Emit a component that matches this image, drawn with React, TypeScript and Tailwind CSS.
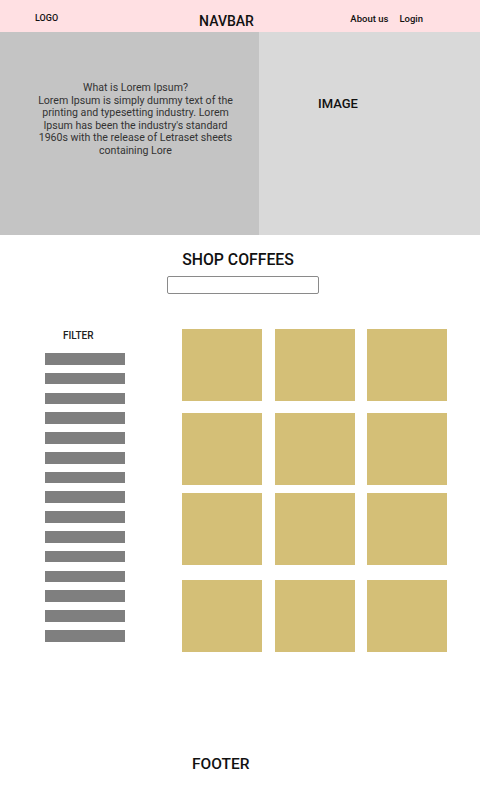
export default function App() {
  const bars = Array.from({ length: 15 }, (_, i) => i);
  const rows = [
    { id: 1, mt: "mt-0" },
    { id: 2, mt: "mt-[12px]" },
    { id: 3, mt: "mt-[8.3px]" },
    { id: 4, mt: "mt-[15px]" },
  ];

  return (
    <div className="w-[480px] min-h-[800px] bg-white font-['Roboto',sans-serif] text-[#111]">
      {/* Navbar */}
      <nav className="h-8 bg-[#ffe0e3] flex items-center pl-[35px] pr-[57px]">
        <span className="pt-[5px] text-[9px] font-medium leading-none">LOGO</span>
        <span className="ml-[141px] pt-[9px] text-[14px] font-medium leading-none">
          NAVBAR
        </span>
        <span className="ml-auto pt-[5px] text-[9.5px] font-medium leading-none">
          About us
        </span>
        <span className="ml-[11px] pt-[5px] text-[9.5px] font-medium leading-none">
          Login
        </span>
      </nav>

      {/* Hero */}
      <section className="h-[203px] flex">
        <div className="w-[259px] bg-[#c4c4c4] pt-[50px] pl-[12px]">
          <p className="text-center text-[10.6px] leading-[12.5px] text-[#333] whitespace-nowrap">
            What is Lorem Ipsum?
            <br />
            Lorem Ipsum is simply dummy text of the
            <br />
            printing and typesetting industry. Lorem
            <br />
            Ipsum has been the industry's standard
            <br />
            1960s with the release of Letraset sheets
            <br />
            containing Lore
          </p>
        </div>
        <div className="flex-1 bg-[#d9d9d9] pt-[59px] pl-[59px]">
          <span className="text-[13px] font-medium leading-4">IMAGE</span>
        </div>
      </section>

      {/* Shop */}
      <section className="pt-[14.5px] flex flex-col items-center">
        <h2 className="mr-[4px] text-[15.8px] font-medium leading-[19px]">
          SHOP COFFEES
        </h2>
        <input
          type="text"
          className="ml-[6px] mt-[7.5px] w-[152px] h-[18px] border border-[#8a8a8a] rounded-[2px] bg-white outline-none"
        />
      </section>

      <section className="mt-[35px] flex pl-[45px]">
        {/* Filter */}
        <div className="w-[80px] flex flex-col">
          <span className="ml-[18px] mt-[1px] text-[10px] font-medium leading-3 text-[#222]">
            FILTER
          </span>
          <div className="mt-[11px] flex flex-col gap-[8.2px]">
            {bars.map((b) => (
              <div key={b} className="h-[11.6px] bg-[#7f7f7f]" />
            ))}
          </div>
        </div>

        {/* Products */}
        <div className="ml-[57px] flex flex-col">
          {rows.map((r) => (
            <div key={r.id} className={`flex gap-[12.6px] ${r.mt}`}>
              <div className="w-[80px] h-[72px] bg-[#d4bf77]" />
              <div className="w-[80px] h-[72px] bg-[#d4bf77]" />
              <div className="w-[80px] h-[72px] bg-[#d4bf77]" />
            </div>
          ))}
        </div>
      </section>

      {/* Footer */}
      <footer className="mt-[100px] pb-[28px] pl-[192px]">
        <span className="text-[15.5px] font-medium leading-[18px]">FOOTER</span>
      </footer>
    </div>
  );
}
